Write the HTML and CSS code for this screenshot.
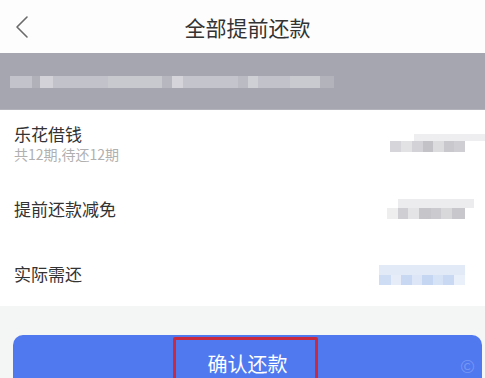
FILE: index.html
```html
<!DOCTYPE html>
<html lang="zh-CN">
<head>
<meta charset="utf-8">
<title>全部提前还款</title>
<link rel="stylesheet" href="styles.css">
</head>
<body>
<div class="page">
  <header class="topbar">
    <div class="back">
      <svg width="14" height="24" viewBox="0 0 14 24"><path d="M12 2 L2 12 L12 22" fill="none" stroke="#6b6b6b" stroke-width="1.6" stroke-linecap="round" stroke-linejoin="round"/></svg>
    </div>
    <h1 class="title">全部提前还款</h1>
    <div class="spacer"></div>
  </header>

  <div class="band">
    <div class="mosaic mosaic-band"></div>
  </div>

  <div class="list">
    <div class="row row-first">
      <div class="label">
        <div class="name">乐花借钱</div>
        <div class="sub">共12期,待还12期</div>
      </div>
      <div class="mosaic val val-1"></div>
    </div>
    <div class="row">
      <div class="name">提前还款减免</div>
      <div class="mosaic val val-2"></div>
    </div>
    <div class="row">
      <div class="name">实际需还</div>
      <div class="mosaic val val-3"></div>
    </div>
  </div>

  <div class="footer">
    <button class="confirm">
      <span class="confirm-text">确认还款</span>
      <span class="mark">©</span>
      <span class="highlight"></span>
    </button>
  </div>
</div>
</body>
</html>
```

FILE: styles.css
```css
html, body {
  margin: 0;
  padding: 0;
  overflow: hidden;
}
body {
  background: #f4f5f5;
  font-family: "Noto Sans CJK SC", "Noto Sans", sans-serif;
  color: #333;
}
.page {
  width: 485px;
  height: 378px;
  display: flex;
  flex-direction: column;
  overflow: hidden;
}
.page > * {
  flex-shrink: 0;
}
.topbar {
  height: 53px;
  background: #fdfdfd;
  display: grid;
  grid-template-columns: 48px 1fr 38px;
  align-items: center;
}
.back {
  padding-left: 15px;
  display: flex;
  align-items: center;
  height: 24px;
  margin-top: 1px;
}
.title {
  margin: 0;
  text-align: center;
  font-size: 21px;
  font-weight: 400;
  color: #333;
  line-height: 1;
  margin-top: 1px;
}
.band {
  height: 56px;
  background: #a6a6b0;
  display: flex;
  align-items: center;
  padding-left: 10px;
  border-bottom: 1px solid #b3b3bb;
}
.mosaic-band {
  width: 324px;
  height: 12px;
  margin-top: 2px;
  background: linear-gradient(to right,
    #c3c3cb 0 22px, #b1b1ba 22px 30px, #d2d2d8 30px 43px, #c2c2ca 43px 98px,
    #c8c8cf 98px 152px, #b7b7c0 152px 162px, #d4d4da 162px 173px, #c4c4cc 173px 228px,
    #bbbbc3 228px 238px, #cfcfd6 238px 248px, #c2c2ca 248px 280px, #c9c9d0 280px 310px,
    #b3b3bc 310px 324px);
}
.list {
  background: #fff;
  display: flex;
  flex-direction: column;
}
.row {
  height: 65px;
  display: flex;
  align-items: center;
  justify-content: space-between;
  padding: 0 20px 0 14px;
}
.row-first {
  height: 66px;
}
.name {
  font-size: 17px;
  line-height: 20px;
  color: #333;
}
.sub {
  font-size: 14px;
  line-height: 16px;
  color: #b0b0b0;
  margin-top: 2px;
}
.val {
  height: 11px;
}
.val-1 {
  width: 75px;
  margin-top: 6px;
  background: linear-gradient(to right,
    #d6d6da 0 11px, #e2e2e5 11px 22px, #d3d3d7 22px 33px, #c2c2c7 33px 43px,
    #dcdcdf 43px 54px, #c9c9cd 54px 64px, #cfcfd3 64px 75px);
  box-shadow: 22px -9px 0 -2px #eeeef0;
}
.val-2 {
  width: 78px;
  margin-top: 10px;
  background: linear-gradient(to right,
    #eeeeef 0 11px, #cfcfd3 11px 21px, #e4e4e6 21px 32px, #c6c6ca 32px 44px,
    #cbcbcf 44px 54px, #d8d8db 54px 65px, #c8c8cc 65px 78px);
  box-shadow: 10px -10px 0 -1px #ececee;
}
.val-3 {
  width: 86px;
  height: 10px;
  margin-top: 12px;
  background: linear-gradient(to right,
    #cfddf4 0 12px, #e6edf9 12px 22px, #c8d8f3 22px 33px, #dde6f6 33px 43px,
    #c5d6f3 43px 54px, #d6e2f6 54px 64px, #c9d9f4 64px 75px, #eaf0fa 75px 86px);
  box-shadow: 0 -10px 0 0 #e3eaf7;
}
.footer {
  padding: 29px 3px 0 13px;
}
.confirm {
  position: relative;
  box-sizing: border-box;
  width: 100%;
  height: 43px;
  overflow: hidden;
  border: 0;
  border-radius: 10px 10px 0 0;
  background: #5079f0;
  color: #fff;
  font-family: "Noto Sans CJK SC", "Noto Sans", sans-serif;
  font-size: 20px;
  line-height: 20px;
  display: flex;
  justify-content: center;
  align-items: flex-start;
  padding: 19px 0 0;
  margin: 0;
}
.mark {
  position: absolute;
  right: 7px;
  top: 21px;
  font-size: 18px;
  line-height: 18px;
  color: rgba(255, 255, 255, 0.22);
}
.highlight {
  position: absolute;
  left: 160px;
  top: 2px;
  width: 139px;
  height: 60px;
  border: 3px solid #c92a3e;
  border-radius: 2px;
}
```
